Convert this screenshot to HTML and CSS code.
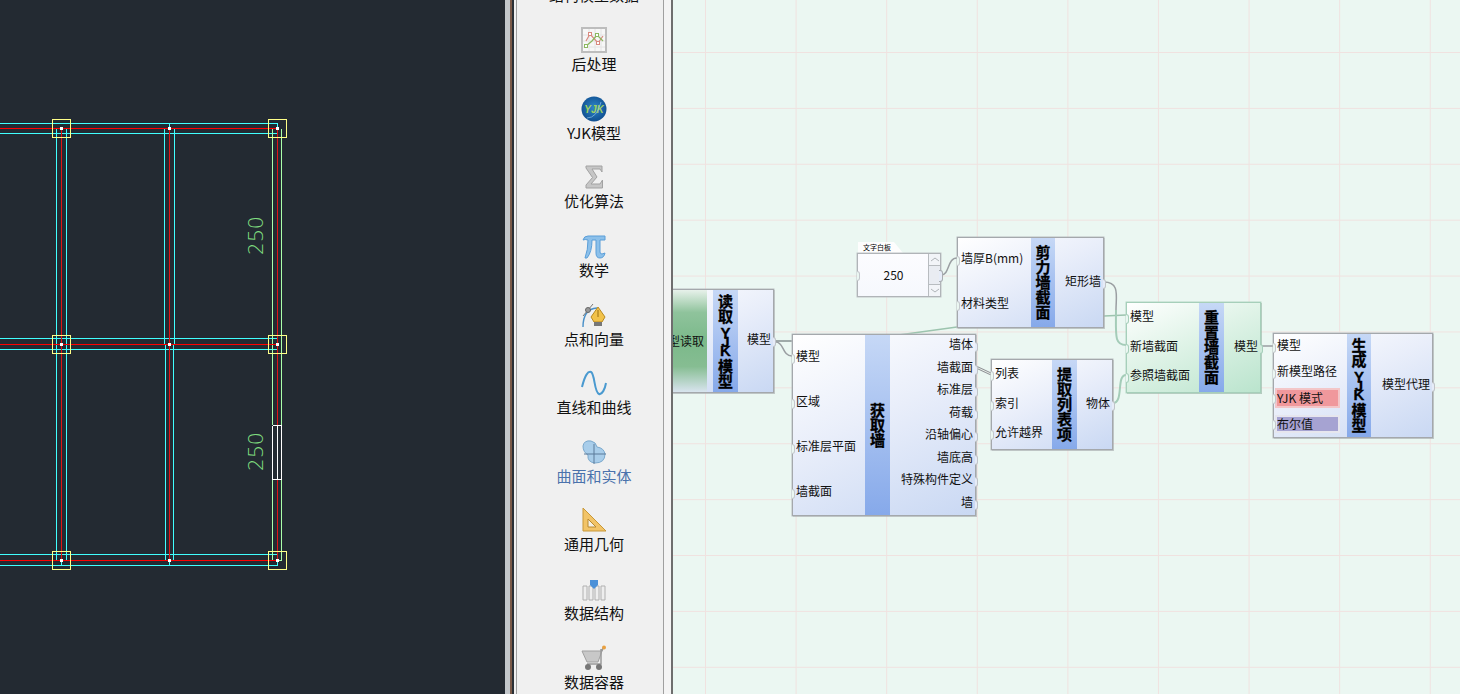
FILE: index.html
```html
<!DOCTYPE html>
<html lang="zh">
<head>
<meta charset="utf-8">
<title>YJK</title>
<link rel="stylesheet" href="styles.css">
</head>
<body>
<div class="app">
  <section class="cad">
    <svg class="cad-svg" width="506" height="694" viewBox="0 0 506 694">
      <g class="c-cyan">
        <path d="M0 123.5H277.5V133.5H0M0 338.5H277.5V349.5H0M0 554.5H277.5V565.5H0"/>
        <path d="M56.5 128.5V560.5H66.5V128.5ZM164.5 344.5V128.5H174.5V344.5ZM165.5 344.5V560.5M173.5 344.5V560.5"/>
        <path d="M169.5 123.5V128.5M61.5 560.5V565.5M169.5 560.5V565.5"/>
      </g>
      <g class="c-green"><path d="M272.5 128.5V425M281.5 128.5V425M272.5 480V560.5H281.5V480"/></g>
      <g class="c-red">
        <path class="thick" d="M0 128.5H277M0 344.5H277M0 560.5H277"/>
        <path d="M61.5 128V560M169.5 128V560M277.5 128V425M277.5 480V560"/>
      </g>
      <g class="c-white"><path d="M272.5 425.5H281.5M272.5 479.5H281.5M272.5 425.5V479.5M281.5 425.5V479.5M277.5 425.5V479.5"/></g>
      <g class="c-yellow">
        <rect x="52.5" y="119.5" width="18" height="18"/><rect x="268.5" y="119.5" width="18" height="18"/>
        <rect x="52.5" y="335.5" width="18" height="18"/><rect x="268.5" y="335.5" width="18" height="18"/>
        <rect x="52.5" y="551.5" width="18" height="18"/><rect x="268.5" y="551.5" width="18" height="18"/>
      </g>
      <g class="c-dots">
        <rect x="60" y="127" width="3" height="3"/><rect x="168" y="127" width="3" height="3"/><rect x="276" y="127" width="3" height="3"/>
        <rect x="60" y="343" width="3" height="3"/><rect x="168" y="343" width="3" height="3"/><rect x="276" y="343" width="3" height="3"/>
        <rect x="60" y="559" width="3" height="3"/><rect x="168" y="559" width="3" height="3"/><rect x="276" y="559" width="3" height="3"/>
      </g>
      <text class="dim" transform="translate(263 255) rotate(-90)">250</text>
      <text class="dim" transform="translate(263 471) rotate(-90)">250</text>
    </svg>
  </section>

  <div class="sp sp-a"></div><div class="sp sp-b"></div><div class="sp sp-c"></div><div class="sp sp-d"></div><div class="sp sp-e"></div>

  <nav class="side">
    <ul class="side-list">
      <li class="item">
        <span class="ic"></span><span class="lbl">结构模型数据</span>
      </li>
      <li class="item">
        <svg class="ic" viewBox="0 0 26 26"><rect x="1" y="1" width="24" height="24" fill="#f7f7f7" stroke="#bdbdbd" stroke-width="2"/><path d="M2 8H24M2 14H24M2 20H24M8 2V24M14 2V24M20 2V24" stroke="#e4e4e4"/><path d="M5 14L9 7L17 16L22 9" fill="none" stroke="#d98a80" stroke-width="1.2"/><path d="M5 19L11 14L16 8L22 14" fill="none" stroke="#8cb860" stroke-width="1.2"/><rect x="3.5" y="17.5" width="3" height="3" fill="#fff" stroke="#8cb860"/><rect x="14.5" y="6.5" width="3" height="3" fill="#fff" stroke="#8cb860"/><rect x="7.5" y="5.5" width="3" height="3" fill="#fff" stroke="#d98a80"/><rect x="15.5" y="14.5" width="3" height="3" fill="#fff" stroke="#d98a80"/></svg>
        <span class="lbl">后处理</span>
      </li>
      <li class="item">
        <svg class="ic" viewBox="0 0 26 26"><defs><radialGradient id="yjk" cx=".5" cy=".45" r=".6"><stop offset="0" stop-color="#2f86c8"/><stop offset="1" stop-color="#0c4a8c"/></radialGradient></defs><circle cx="13" cy="13" r="12.5" fill="url(#yjk)"/><text class="yjk-t" x="13" y="16.5">YJK</text><path d="M6 22Q16 22 20 6" fill="none" stroke="#8cc4ec" stroke-width=".7"/></svg>
        <span class="lbl">YJK模型</span>
      </li>
      <li class="item">
        <svg class="ic" viewBox="0 0 26 26"><path d="M5 2H21V8L19 5H11L16 13L10 20H19L21.5 16V24H5V21L11.5 13.5L5 4Z" fill="#c6c6c6" stroke="#a2a2a2"/></svg>
        <span class="lbl">优化算法</span>
      </li>
      <li class="item">
        <svg class="ic" viewBox="0 0 26 26"><path d="M2 7Q3 3 7 3H24V7H19V19Q19 21 21 21L24 20Q23 25 19 25Q15 25 15 20V7H11Q11 19 6 25H4Q7 17 7 7Q4 6 2 7Z" fill="#8cc0ea" stroke="#5a9ed8"/></svg>
        <span class="lbl">数学</span>
      </li>
      <li class="item">
        <svg class="ic" viewBox="0 0 26 26"><path d="M2 25Q2 7 16 6" fill="none" stroke="#4a90c8" stroke-width="1.4"/><path d="M2 14L12 2" stroke="#777"/><circle cx="7" cy="8" r="2.5" fill="#999" stroke="#666"/><path d="M17 5L24 15L21 20H13L10 15Z" fill="#f2c24a" stroke="#b88a20"/><path d="M17 8V15" stroke="#9a7010"/><rect x="13" y="20" width="8" height="4" fill="#777"/></svg>
        <span class="lbl">点和向量</span>
      </li>
      <li class="item">
        <svg class="ic" viewBox="0 0 26 26"><path d="M1 17C4 5 7 1 10 2C14 4 13 22 18 24C21 25 24 19 25 13" fill="none" stroke="#4a9ad0" stroke-width="2"/></svg>
        <span class="lbl">直线和曲线</span>
      </li>
      <li class="item active">
        <svg class="ic" viewBox="0 0 26 26"><path d="M2 7Q3 1 10 2Q15 3 16 8Q23 9 24 15Q24 24 14 24Q6 23 7 16Q2 13 2 7Z" fill="#a8cdea" stroke="#7aa8cc"/><path d="M13 5V25M3 15H25" stroke="#5a7a9a"/></svg>
        <span class="lbl">曲面和实体</span>
      </li>
      <li class="item">
        <svg class="ic" viewBox="0 0 26 26"><path d="M2 1L25 24H2Z" fill="#f2c468" stroke="#c89838"/><path d="M7 12L15 20H7Z" fill="#f4f0e4" stroke="#b88a30"/></svg>
        <span class="lbl">通用几何</span>
      </li>
      <li class="item">
        <svg class="ic" viewBox="0 0 26 26"><path d="M2 10H6V24H2ZM8 10H12V24H8ZM14 10H18V24H14ZM20 10H24V24H20Z" fill="#eee" stroke="#b0b0b0"/><path d="M9 4H17V9L13 13L9 9Z" fill="#4a90d8"/></svg>
        <span class="lbl">数据结构</span>
      </li>
      <li class="item">
        <svg class="ic" viewBox="0 0 26 26"><path d="M1 6H21L17 17H6Z" fill="#c8c8c8" stroke="#a0a0a0"/><path d="M21 6L22 3M6 19H20V4" fill="none" stroke="#999" stroke-width="1.5"/><circle cx="23" cy="2.5" r="2" fill="#e8a040"/><circle cx="7" cy="22" r="3" fill="#777"/><circle cx="18" cy="22" r="3" fill="#777"/></svg>
        <span class="lbl">数据容器</span>
      </li>
    </ul>
  </nav>

  <div class="sp sp-f"></div><div class="sp sp-g"></div><div class="sp sp-h"></div>

  <main class="canvas">
    <svg class="wires" width="787" height="694" viewBox="673 0 787 694">
      <path class="w-green" d="M775 341L855 341L957 327L1104 316L1126 315"/>
      <path class="w-grey" d="M775 341H792"/>
      <path class="w-grey" d="M776 342C784 342 782 356 792 356"/>
      <path class="w-grey" d="M941 275C950 275 947 258 957 258"/>
      <path class="w-grey" d="M1104 282C1120 282 1116 296 1116 310"/>
      <path class="w-green2" d="M1116 310C1116 335 1114 345 1126 345"/>
      <path class="w-double" d="M976 367L991 374"/>
      <path class="w-double-in" d="M976 367L991 374"/>
      <path class="w-green2" d="M1113 403C1124 403 1116 375 1126 375"/>
      <path class="w-grey" d="M1261 346H1273"/>
    </svg>

    <div class="tab">文字白板</div>
    <div class="slider">
      <div class="slider-val">250</div>
      <div class="stepper">
        <div class="step"><svg width="10" height="5" viewBox="0 0 10 5"><path d="M1 4L5 1L9 4" fill="none" stroke="#b0b4b8"/></svg></div>
        <div class="step mid"></div>
        <div class="step"><svg width="10" height="5" viewBox="0 0 10 5"><path d="M1 1L5 4L9 1" fill="none" stroke="#b0b4b8"/></svg></div>
      </div>
    </div>

    <div class="node n-read">
      <div class="col preview"><span class="preview-t">模型读取</span></div>
      <div class="band">读取<span class="lat">YJK</span>模型</div>
      <div class="col"><div class="row out">模型</div></div>
    </div>

    <div class="node n-wall">
      <div class="col">
        <div class="row in">模型</div><div class="row in">区域</div><div class="row in">标准层平面</div><div class="row in">墙截面</div>
      </div>
      <div class="band">获取墙</div>
      <div class="col">
        <div class="row out">墙体</div><div class="row out">墙截面</div><div class="row out">标准层</div><div class="row out">荷载</div><div class="row out">沿轴偏心</div><div class="row out">墙底高</div><div class="row out">特殊构件定义</div><div class="row out">墙</div>
      </div>
    </div>

    <div class="node n-list">
      <div class="col">
        <div class="row in">列表</div><div class="row in">索引</div><div class="row in">允许越界</div>
      </div>
      <div class="band">提取列表项</div>
      <div class="col"><div class="row out">物体</div></div>
    </div>

    <div class="node n-sec">
      <div class="col">
        <div class="row in">墙厚B(mm)</div><div class="row in">材料类型</div>
      </div>
      <div class="band">剪力墙截面</div>
      <div class="col"><div class="row out">矩形墙</div></div>
    </div>

    <div class="node n-reset green">
      <div class="col">
        <div class="row in">模型</div><div class="row in">新墙截面</div><div class="row in">参照墙截面</div>
      </div>
      <div class="band">重置墙截面</div>
      <div class="col"><div class="row out">模型</div></div>
    </div>

    <div class="node n-gen">
      <div class="col">
        <div class="row in">模型</div><div class="row in">新模型路径</div>
        <div class="row in"><span class="tag tag-red">YJK 模式</span></div>
        <div class="row in"><span class="tag tag-blue">布尔值</span></div>
      </div>
      <div class="band">生成<span class="lat">YJK</span>模型</div>
      <div class="col"><div class="row out">模型代理</div></div>
    </div>
  </main>
</div>
</body>
</html>
```
FILE: styles.css
```css
* { box-sizing: border-box; }
html, body { margin: 0; padding: 0; height: 100%; overflow: hidden; }
body { font-family: "Noto Sans CJK SC", "Liberation Sans", sans-serif; background: #f0f0f0; }

.app { display: flex; width: 1460px; height: 694px; overflow: hidden; }

/* CAD view */
.cad { flex: 0 0 505px; height: 694px; background: #232a32; overflow: hidden; }
.cad-svg { display: block; }
.cad-svg path, .cad-svg rect { fill: none; stroke-width: 1; shape-rendering: crispEdges; }
.c-cyan path { stroke: #40ffff; }
.c-green path { stroke: #aaffaa; }
.c-red path { stroke: #e01414; }
.c-red .thick { stroke: #ff0000; stroke-width: 1.5; }
.c-white path { stroke: #ffffff; }
.c-yellow rect { stroke: #ffff88; }
.cad-svg .c-dots rect { fill: #ffffff; stroke: none; }
.dim { font-family: "Open Sans", sans-serif; font-weight: 300; font-size: 21px; letter-spacing: 1.2px; fill: #7fdc7f; }

/* splitters */
.sp { height: 694px; flex: none; }
.sp-a { width: 5px; background: #c3c7cb; }
.sp-b { width: 2px; background: #7a5a48; }
.sp-c { width: 2px; background: #2a3036; }
.sp-d { width: 2px; background: #f0f0f0; }
.sp-e { width: 1px; background: #a0a0a0; }
.sp-f { width: 1px; background: #a0a0a0; }
.sp-g { width: 7px; background: #f4f4f4; }
.sp-h { width: 2px; background: #6e6e6e; }

/* side list */
.side { flex: 0 0 146px; height: 694px; background: #f0f0f0; overflow: hidden; }
.side-list { list-style: none; margin: -47.65px 0 0; padding: 0 0 0 8px; }
.item { height: 68.65px; padding-top: 6px; display: flex; flex-direction: column; align-items: center; color: #111; }
.ic { display: block; width: 26px; height: 26px; flex: none; }
.lbl { font-size: 15px; line-height: 20px; margin-top: 1px; white-space: nowrap; }
.active .lbl { color: #4a72ac; }
.yjk-t { font-family: "Liberation Sans", sans-serif; font-weight: 700; font-style: italic; font-size: 10px; fill: #9fd060; text-anchor: middle; }

/* canvas */
.canvas {
  flex: 1; height: 694px; position: relative; overflow: hidden;
  background-color: #ebf7f2;
  background-image:
    linear-gradient(to right, #f0e2e0 1px, transparent 1px),
    linear-gradient(to bottom, #f0e2e0 1px, transparent 1px);
  background-size: 90.6px 55.9px;
  background-position: 32px 52px;
}
.wires { position: absolute; left: 0; top: 0; }
.wires path { fill: none; }
.w-green { stroke: #9cc4ae; stroke-width: 1.5; }
.w-grey { stroke: #9a9ea2; stroke-width: 1.5; }
.w-green2 { stroke: #a4ccb8; stroke-width: 2; }
.w-double { stroke: #8f9296; stroke-width: 3; }
.w-double-in { stroke: #e8eee9; stroke-width: 1; }

/* nodes */
.node {
  position: absolute; display: grid;
  border: 1px solid #a4a8ac;
  box-shadow: 0 0 0 .5px #b8bcc0, 1px 1px 0 rgba(120,125,130,.35);
  background: linear-gradient(155deg, #ffffff 0%, #e9eefa 45%, #c9d8f3 100%);
  font-size: 12px; color: #111;
}
.col { display: flex; flex-direction: column; min-width: 0; }
.row { flex: 1; display: flex; align-items: center; position: relative; white-space: nowrap; line-height: 16px; padding-bottom: 4px; }
.row.in { padding-left: 3px; }
.row.out { justify-content: flex-end; padding-right: 2px; }
.row.in::before {
  content: ""; position: absolute; left: -1px; top: 50%; margin-top: -4px;
  width: 2px; height: 8px; background: #ebf7f2;
  border: 1px solid #c4c8cc; border-left: 0; border-radius: 0 3px 3px 0;
}
.row.out::after {
  content: ""; position: absolute; right: -3px; top: 50%; margin-top: -4px;
  width: 2px; height: 8px; background: #e6ecf8;
  border: 1px solid #c0c4c8; border-left: 0; border-radius: 0 3px 3px 0;
}
.band {
  writing-mode: vertical-rl; text-orientation: upright;
  display: flex; align-items: center; justify-content: center;
  background: linear-gradient(to bottom, #c6d8f6, #86a9ea);
  font-size: 15px; font-weight: 700; line-height: 25px; color: #000; letter-spacing: 0;
  -webkit-text-stroke: .3px #000;
}
.lat { font-family: "Liberation Sans", sans-serif; letter-spacing: -8px; padding-bottom: 8px; }

.n-read { left: -40px; top: 289px; width: 141px; height: 104px; grid-template-columns: 79px 25px 35px; }
.n-wall { left: 119px; top: 334px; width: 184px; height: 182px; grid-template-columns: 72px 25px 85px; }
.n-list { left: 318px; top: 359px; width: 122px; height: 91px; grid-template-columns: 60px 25px 35px; }
.n-sec { left: 284px; top: 237px; width: 147px; height: 91px; grid-template-columns: 73px 24px 48px; }
.n-reset { left: 453px; top: 302px; width: 135px; height: 91px; grid-template-columns: 72px 25px 36px; }
.n-gen { left: 600px; top: 333px; width: 160px; height: 105px; grid-template-columns: 73px 24px 61px; }

.green {
  border-color: #a6cfba;
  box-shadow: 0 0 0 .5px #b4d6c4, 1px 1px 0 rgba(110,130,120,.45);
  background: linear-gradient(155deg, #ffffff 0%, #dff3e7 45%, #bae4cd 100%);
}
.green .row.out::after { background: #cfeadb; border-color: #a6cfba; }
.green .row.in::before { border-color: #a6cfba; }

.preview { background: linear-gradient(to bottom, #e7f1ea 0%, #8fc39c 22%, #7bb98a 50%, #86bd92 75%, #d8e4ee 100%); margin-right: 6px; }
.preview-t { margin: auto 3px auto auto; white-space: nowrap; line-height: 16px; }

.tag { display: block; width: 65px; height: 20px; line-height: 16px; margin: 0 0 -4px -2px; }
.tag-red { background: #f0989c; border: 2px solid #f3c6c8; }
.tag-blue { background: #a6a3d2; border: 2px solid #e6e6ee; height: 18px; line-height: 14px; }

/* number slider */
.tab {
  position: absolute; left: 185px; top: 242px; width: 45px; height: 11px;
  background: #fdfdfd; font-size: 7px; line-height: 11px; padding-left: 5px; color: #000; white-space: nowrap;
  clip-path: polygon(0 0, 36px 0, 45px 11px, 0 11px);
}
.slider {
  position: absolute; left: 184px; top: 253px; width: 84px; height: 44px;
  display: flex; background: linear-gradient(to bottom, #fcfcff, #f6f8fd);
  border: 1px solid #b0b4b8; box-shadow: 0 0 0 .5px #c0c4c8;
}
.slider::before {
  content: ""; position: absolute; left: -1px; top: 50%; margin-top: -4px;
  width: 2px; height: 8px; background: #ebf7f2;
  border: 1px solid #c4c8cc; border-left: 0; border-radius: 0 3px 3px 0;
}
.slider::after {
  content: ""; position: absolute; right: -3px; top: 50%; margin-top: -5px;
  width: 3px; height: 10px; background: #e6ecf8;
  border: 1px solid #a8acb0; border-left: 0; border-radius: 0 3px 3px 0;
}
.slider-val { flex: 1; display: flex; align-items: center; justify-content: center; font-size: 12px; line-height: 16px; color: #111; padding-left: 1px; }
.stepper { flex: 0 0 12px; display: flex; flex-direction: column; border-left: 1px solid #b8bcc0; }
.step { height: 11px; display: flex; align-items: center; justify-content: center; background: #f2f4f8; }
.step.mid { flex: 1; height: auto; border-top: 1px solid #b8bcc0; border-bottom: 1px solid #b8bcc0; background: #e9ecf2; }
```
